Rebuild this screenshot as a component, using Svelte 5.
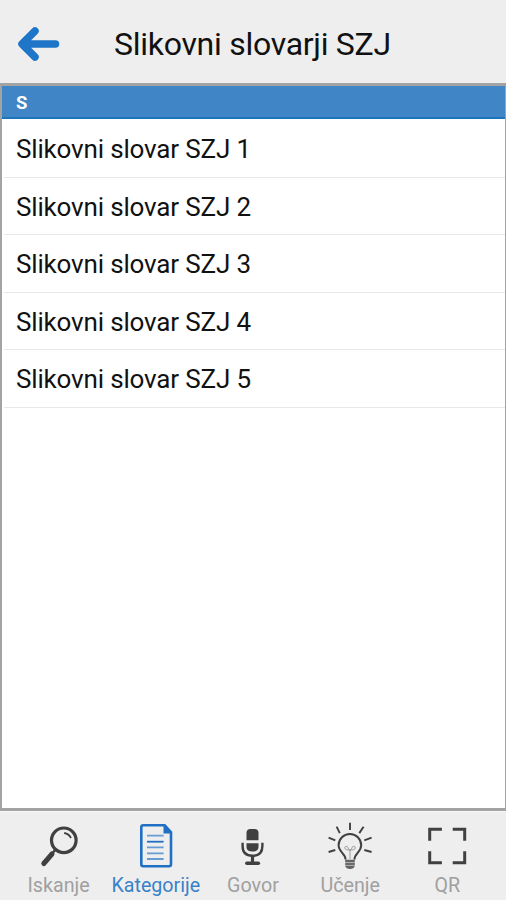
<script lang="ts">
  const entries = [1, 2, 3, 4, 5].map(n => `Slikovni slovar SZJ ${n}`);

  const tabs = [
    { id: 'search', label: 'Iskanje' },
    { id: 'categories', label: 'Kategorije' },
    { id: 'speech', label: 'Govor' },
    { id: 'learn', label: 'Učenje' },
    { id: 'qr', label: 'QR' },
  ];

  let active = $state('categories');
</script>

<div class="screen">
  <header class="topbar">
    <button class="back" aria-label="Nazaj">
      <svg width="42" height="36" viewBox="0 0 42 36">
        <path d="M37.5 18H6M17 5 4 18l13 13" />
      </svg>
    </button>
    <h1>Slikovni slovarji SZJ</h1>
  </header>

  <main class="list">
    <h2 class="group">S</h2>
    <ul>
      {#each entries as entry (entry)}
        <li>{entry}</li>
      {/each}
    </ul>
  </main>

  <nav class="tabs">
    {#each tabs as tab (tab.id)}
      <button class="tab" class:active={active === tab.id} onclick={() => (active = tab.id)}>
        <svg class="icon" width="48" height="50" viewBox="0 0 48 50">
          {#if tab.id === 'search'}
            <circle cx="28.800" cy="19.3" r="12.3" stroke-width="3.200" />
            <path d="M29.2 12q4.800.7 6.800 5" stroke-width="1.8" />
            <path d="M20.600 28.5l-3 3.500" stroke-width="2.500" />
            <path d="M17 33 8.800 42.500" stroke-width="5" stroke-linecap="round" />
          {:else if tab.id === 'categories'}
            <path d="M11.5 4.3h21.2l6.300 7v31.900q0 2-2 2H11.300q-2 0-2-2V6.300q0-2 2-2z" stroke-width="2.600" />
            <path class="fill" d="M31.500 4v8.500h8z" />
            <path d="M15 14.700h16.600M15 26.300h16.600M15 32.300h16.600M15 38h16.600" stroke-width="1.800" opacity=".65" />
            <path d="M15 20.700h16.600" stroke-width="1.800" />
          {:else if tab.id === 'speech'}
            <path class="fill" d="M17.500 19.300V12q0-4 4-4h4q4 0 4 4v7.300zM17.500 22.300h12V26q0 4.500-6 4.500t-6-4.500z" />
            <path d="M13.600 21.700V25q0 9.800 9.900 9.800T33.400 25v-3.300" stroke-width="2.400" />
            <path d="M23.500 35v7" stroke-width="3.200" />
            <path d="M17.800 42.300h11.600" stroke-width="3.400" stroke-linecap="round" />
          {:else if tab.id === 'learn'}
            <path d="M19.600 38.500c0-6-7-7.500-7-14.200a11.300 11.300 0 0 1 22.600 0c0 6.700-6.800 8.200-6.800 14.200" stroke-width="2" />
            <path d="M24 1.700v7.200M10.600 5.700l3.200 6.400M37.600 5.700l-4.300 6.400M2.600 16.700l6.700 2.600M2.600 31l6.700-2M45.600 16.700l-7.300 2.600M45.600 31l-7.300-2" stroke-width="1.900" />
            <path d="M24 38v-9.500M22.500 29c-5 0-4.500-4.500-1.500-3.500 2 .7 1 4 3 4s1-3.300 3-4c3-1 3.500 3.500-1.500 3.500" stroke-width=".8" opacity=".6" />
            <path class="fill" d="M19.200 38.800h9.600v6.200q-1 3-4.800 3t-4.800-3z" opacity=".8" />
            <path class="cut" d="M19 41.600h10M19 44.400h10" />
          {:else}
            <path d="M6.700 19.700V8.200h12.200M29.700 8.200h12v11.500M6.700 30.300v11.500h12.200M29.700 41.800h12V30.300" stroke-width="3" />
          {/if}
        </svg>
        <span>{tab.label}</span>
      </button>
    {/each}
  </nav>
</div>

<style>
  :global(body) {
    background: #eee;
  }
  .screen {
    display: flex;
    flex-direction: column;
    width: 506px;
    height: 900px;
    overflow: hidden;
    background: #eee;
    color: #111;
    font-family: Roboto, "Liberation Sans", sans-serif;
  }
  button {
    border: none;
    background: none;
    padding: 0;
    font: inherit;
    cursor: pointer;
  }
  .topbar {
    display: flex;
    align-items: center;
    flex: 0 0 83px;
    padding: 5px 0 0 18px;
    box-sizing: border-box;
  }
  .back {
    display: flex;
    width: 42px;
    margin-right: 54px;
  }
  .back path {
    fill: none;
    stroke: #1f76c8;
    stroke-width: 7.5;
    stroke-linecap: round;
    stroke-linejoin: round;
  }
  h1 {
    margin: 0;
    font-size: 32px;
    font-weight: 400;
    letter-spacing: -0.28px;
    line-height: 38px;
    white-space: nowrap;
  }
  .list {
    flex: 1;
    background: #fff;
    border: solid #a3a3a3;
    border-width: 3px 1px 3px 2px;
  }
  .group {
    height: 33px;
    margin: 0;
    padding-left: 14px;
    box-sizing: border-box;
    background: #4085c5;
    border-bottom: 2px solid #1b75bd;
    color: #fff;
    font-size: 18.5px;
    font-weight: 700;
    line-height: 35px;
  }
  ul {
    list-style: none;
    margin: 0;
    padding: 1px 0 0 2px;
  }
  li {
    height: 57.6px;
    padding-left: 12px;
    box-sizing: border-box;
    border-bottom: 1px solid #e8e8e8;
    font-size: 26px;
    letter-spacing: -0.16px;
    line-height: 58px;
  }
  .tabs {
    display: flex;
    flex: 0 0 89px;
    padding: 0 10px;
    border-top: 1px solid #fafafa;
    box-sizing: border-box;
  }
  .tab {
    display: flex;
    flex: 1;
    flex-direction: column;
    align-items: center;
    padding-top: 9px;
    color: #a0a0a0;
    font-size: 19.7px;
    line-height: 24px;
  }
  .tab span {
    margin-top: 3px;
  }
  .icon {
    flex: none;
    fill: none;
    stroke: #404040;
  }
  .icon .fill {
    fill: #404040;
    stroke: none;
  }
  .icon .cut {
    stroke: #ccc;
    stroke-width: 0.8;
  }
  .active {
    color: #3a82c8;
  }
  .active .icon {
    stroke: #1f70c4;
  }
  .active .icon .fill {
    fill: #1f70c4;
  }
</style>
